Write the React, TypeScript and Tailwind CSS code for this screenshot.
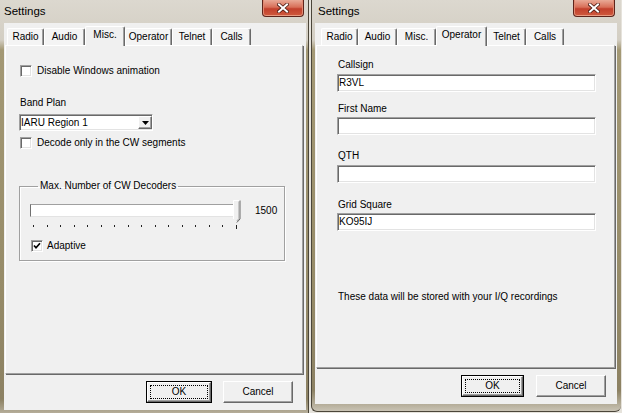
import React from 'react';

const sunken =
  'border border-t-[#a0a0a0] border-l-[#a0a0a0] border-b-white border-r-white shadow-[inset_1px_1px_0_#696969,inset_-1px_-1px_0_#e3e3e3]';

function Checkbox({ checked = false }: { checked?: boolean }) {
  return (
    <span className={`w-[12px] h-[12px] shrink-0 bg-white flex items-center justify-center ${sunken}`}>
      {checked && (
        <svg width="8" height="8" viewBox="0 0 8 8">
          <polyline points="1,3.5 3,5.8 7,1.2" fill="none" stroke="#000" strokeWidth="1.7" />
        </svg>
      )}
    </span>
  );
}

function CloseButton() {
  return (
    <div className="w-[42px] h-[17px] rounded-b-[4px] border border-t-0 border-[#5e241b] bg-[linear-gradient(to_bottom,#e9a996_0%,#d86f58_45%,#c2402c_55%,#cf5a3e_100%)] shadow-[inset_0_-1px_0_#e89a80,inset_1px_0_0_#e08a72,inset_-1px_0_0_#e08a72] flex items-center justify-center">
      <svg width="12" height="10" viewBox="0 0 12 10">
        <path d="M2 1.5 L10 8.5 M10 1.5 L2 8.5" stroke="#4a1a12" strokeWidth="3.6" strokeLinecap="square" />
        <path d="M2 1.5 L10 8.5 M10 1.5 L2 8.5" stroke="#fff" strokeWidth="2" strokeLinecap="square" />
      </svg>
    </div>
  );
}

function Tabs({ tabs, active, widths, pl }: { tabs: string[]; active: string; widths: string[]; pl: string }) {
  return (
    <div className={`h-[22px] flex items-end ${pl}`}>
      {tabs.map((t, i) =>
        t === active ? (
          <div
            key={t}
            className={`${widths[i]} h-[20px] -mb-px relative z-10 bg-[#f0f0f0] rounded-t-[2px] border-t border-l border-white border-r border-r-[#696969] shadow-[inset_-1px_0_0_#a0a0a0] flex justify-center pt-[2px] leading-[12px]`}
          >
            {t}
          </div>
        ) : (
          <div
            key={t}
            className={`${widths[i]} h-[17px] bg-[#f4f4f4] rounded-t-[2px] border-t border-l border-white border-r border-r-[#696969] shadow-[inset_-1px_0_0_#a0a0a0] flex items-center justify-center leading-[12px]`}
          >
            {t}
          </div>
        )
      )}
    </div>
  );
}

function Btn({ label, def = false, w }: { label: string; def?: boolean; w: string }) {
  if (def) {
    return (
      <div className={`${w} h-[22px] border border-black`}>
        <div className="h-full border border-t-white border-l-white border-r-[#696969] border-b-[#696969] shadow-[inset_-1px_-1px_0_#a0a0a0] bg-[#f0f0f0] p-[2px]">
          <div className="h-full border border-dotted border-black flex items-center justify-center leading-[12px]">
            {label}
          </div>
        </div>
      </div>
    );
  }
  return (
    <div
      className={`${w} h-[22px] border border-t-white border-l-white border-r-[#696969] border-b-[#696969] shadow-[inset_-1px_-1px_0_#a0a0a0] bg-[#f0f0f0] flex items-center justify-center leading-[12px]`}
    >
      {label}
    </div>
  );
}

const frameBg =
  'bg-[linear-gradient(to_bottom,#dcd8cf_0px,#d3cec3_40px,#a49975_50px,#968b68_70%,#8c8163_95%,#c9c3b4_100%)]';

const panelCls =
  'bg-[#f0f0f0] border-t border-l border-white border-r border-b border-r-[#a0a0a0] border-b-[#a0a0a0] shadow-[1px_1px_0_#696969]';

const TABS = ['Radio', 'Audio', 'Misc.', 'Operator', 'Telnet', 'Calls'];

function MiscWindow() {
  const ticks = Array.from({ length: 16 });
  return (
    <div className={`w-[309px] h-[420px] shrink-0 border-r border-[#4b463a] flex flex-col ${frameBg}`}>
      <div className="h-[23px] flex items-start justify-between">
        <span className="pl-[4px] leading-[23px] text-[11.5px]">Settings</span>
        <div className="mr-[4px]">
          <CloseButton />
        </div>
      </div>
      <div className="ml-[4px] mr-[2px] h-[387px] bg-[#f0f0f0] flex flex-col">
        <Tabs
          tabs={TABS}
          active="Misc."
          pl="pl-[3px]"
          widths={['w-[37px]', 'w-[41px]', 'w-[40px]', 'w-[47px]', 'w-[40px]', 'w-[39px]']}
        />
        <div className={`ml-[1px] w-[298px] h-[329px] ${panelCls} flex flex-col`}>
          <div className="mt-[19px] ml-[14px] flex items-center h-[12px]">
            <Checkbox />
            <span className="ml-[5px] leading-[12px]">Disable Windows animation</span>
          </div>
          <div className="mt-[20px] ml-[14px] leading-[12px]">Band Plan</div>
          <div className={`mt-[5px] ml-[13px] w-[134px] h-[17px] bg-white ${sunken} flex items-center justify-between`}>
            <span className="pl-[1px] leading-[12px]">IARU Region 1</span>
            <div className="w-[14px] h-[13px] mr-[0px] border border-t-white border-l-white border-r-[#696969] border-b-[#696969] shadow-[inset_-1px_-1px_0_#a0a0a0] bg-[#f0f0f0] flex items-center justify-center">
              <svg width="7" height="4" viewBox="0 0 7 4">
                <polygon points="0,0 7,0 3.5,4" fill="#000" />
              </svg>
            </div>
          </div>
          <div className="mt-[6px] ml-[14px] flex items-center h-[12px]">
            <Checkbox />
            <span className="ml-[5px] leading-[12px]">Decode only in the CW segments</span>
          </div>
          <fieldset className="mt-[31px] ml-[13px] w-[266px] border border-[#a0a0a0] shadow-[inset_1px_1px_0_#fff,1px_1px_0_#fff] pl-[10px] pb-[8px]">
            <legend className="ml-[8px] px-[2px] leading-[12px]">Max. Number of CW Decoders</legend>
            <div className="mt-[8px] flex items-center h-[22px]">
              <div className="relative w-[210px] h-[22px]">
                <div className="mt-[4px] w-[207px] h-[13px] bg-white border-t border-l border-t-[#a0a0a0] border-l-[#707070] border-b border-b-[#e3e3e3]" />
                <svg className="absolute left-[203px] top-0" width="8" height="23" viewBox="0 0 8 23">
                  <polygon points="0.5,0.5 7,0.5 7,19 3.8,22.5 0.5,19" fill="#f0f0f0" />
                  <polyline points="0.5,19 0.5,0.5 7,0.5" fill="none" stroke="#fff" />
                  <polyline points="7,0.5 7,19 3.8,22.5" fill="none" stroke="#696969" />
                  <polyline points="6,1.5 6,18.6 3.8,21" fill="none" stroke="#a0a0a0" />
                </svg>
              </div>
              <span className="ml-[15px] leading-[12px]">1500</span>
            </div>
            <div className="mt-[3px] ml-[3px] w-[204px] h-[3px] flex justify-between">
              {ticks.map((_, i) => (
                <span key={i} className={`w-[1px] ${i === 15 ? 'h-[4px]' : 'h-[2px]'} bg-[#222]`} />
              ))}
            </div>
            <div className="mt-[12px] ml-[1px] flex items-center h-[12px]">
              <Checkbox checked />
              <span className="ml-[4px] leading-[12px]">Adaptive</span>
            </div>
          </fieldset>
        </div>
        <div className="pt-[7px] pr-[13px] flex justify-end gap-[11px]">
          <Btn label="OK" def w="w-[66px]" />
          <Btn label="Cancel" w="w-[70px]" />
        </div>
      </div>
    </div>
  );
}

function Field({ label, value, mt, gap }: { label: string; value: string; mt: string; gap: string }) {
  return (
    <>
      <div className={`${mt} ml-[21px] leading-[12px]`}>{label}</div>
      <div className={`${gap} ml-[20px] w-[259px] h-[18px] bg-white ${sunken} flex items-center`}>
        <span className="pl-[1px] leading-[12px]">{value}</span>
      </div>
    </>
  );
}

function OperatorWindow() {
  return (
    <div className={`w-[310px] h-[412px] shrink-0 border-l border-b border-[#4b463a] rounded-b-[6px] flex flex-col ${frameBg}`}>
      <div className="h-[23px] flex items-start justify-between">
        <span className="pl-[6px] leading-[23px] text-[11.5px]">Settings</span>
        <div className="mr-[6px]">
          <CloseButton />
        </div>
      </div>
      <div className="ml-[3px] mr-[4px] h-[381px] bg-[#f0f0f0] flex flex-col">
        <Tabs
          tabs={TABS}
          active="Operator"
          pl="pl-[6px]"
          widths={['w-[37px]', 'w-[39px]', 'w-[39px]', 'w-[51px]', 'w-[39px]', 'w-[38px]']}
        />
        <div className={`ml-[1px] w-[299px] h-[323px] ${panelCls} flex flex-col`}>
          <Field label="Callsign" value="R3VL" mt="mt-[13px]" gap="mt-[3px]" />
          <Field label="First Name" value="" mt="mt-[11px]" gap="mt-[2px]" />
          <Field label="QTH" value="" mt="mt-[15px]" gap="mt-[3px]" />
          <Field label="Grid Square" value="KO95IJ" mt="mt-[16px]" gap="mt-[2px]" />
          <div className="mt-[60px] ml-[21px] leading-[12px]">These data will be stored with your I/Q recordings</div>
        </div>
        <div className="pt-[7px] pr-[11px] flex justify-end gap-[12px]">
          <Btn label="OK" def w="w-[63px]" />
          <Btn label="Cancel" w="w-[70px]" />
        </div>
      </div>
    </div>
  );
}

export default function App() {
  return (
    <div className="w-[622px] h-[413px] overflow-hidden bg-[#e6e3dc] flex gap-[2px] font-['Liberation_Sans',Arial,sans-serif] text-[10px] text-black">
      <MiscWindow />
      <OperatorWindow />
    </div>
  );
}
